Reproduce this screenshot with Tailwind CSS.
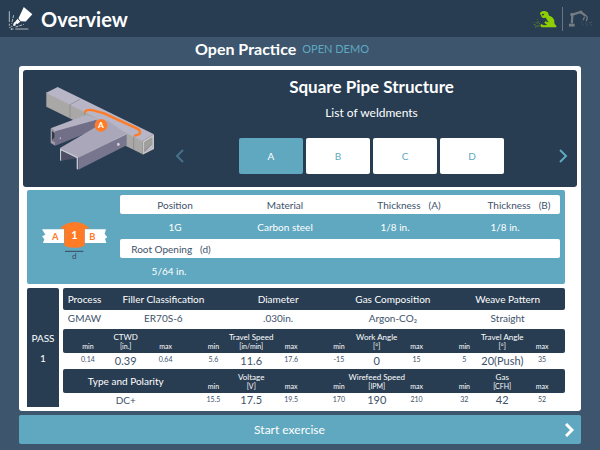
<!DOCTYPE html>
<html lang="en">
<head>
    <meta charset="UTF-8">
    <meta name="viewport" content="width=device-width, initial-scale=1.0">
    <title>Overview - Open Practice</title>
    <script src="https://cdn.jsdelivr.net/npm/@tailwindcss/browser@4"></script>
</head>
<body class="min-h-screen bg-[#3d566e] font-['Lato',sans-serif] text-[10px] leading-3 text-[#3d526a]">

<!-- Top bar -->
<header class="flex h-[37px] items-center justify-between bg-[#283d52] px-2 text-white">
    <div class="flex items-center gap-2">
        <svg class="h-[25px] w-[25px]" viewBox="24 18 76 76" fill="none" aria-hidden="true">
            <path d="M72 21L98 43L78 65L62 64L56 55Z" fill="#fff"/>
            <path d="M53 57L61 66L53 73L48 71L46 79L39 77L42 69L46 66Z" fill="#fff"/>
            <path d="M28 34V67M46 88H86" stroke="#fff" stroke-width="2"/>
            <path d="M41 46L35 72M47 82L72 74" stroke="#fff" stroke-width="2" stroke-dasharray="9 3"/>
            <path d="M28 72V78M28 83H32M34 78L37 82M34 88H41M34 86V91" stroke="#fff" stroke-width="2"/>
        </svg>
        <h1 class="text-[20px] leading-7 font-bold">Overview</h1>
    </div>
    <div class="flex items-center gap-[5px]">
        <svg class="h-6 w-6" viewBox="98 20 76 68" fill="none" aria-hidden="true">
            <path d="M120 37Q122 29 133 29Q144 29 147 37L148 43Q161 47 165 57L166 69L172 75V80H125L121 75L124 70L132 74L143 73L134 66L137 61L148 65L141 55L139 50L130 51Q123 48 124 43Z" fill="#8fce00"/>
            <path d="M126 38L134 37L131 43L127 42Z" fill="#283d52"/>
            <path d="M101 72H106M109 76H119M108 65L112 69M104 79H109M113 61L115 66M118 67L120 71M100 65H102M112 54V56" stroke="#7cb00e" stroke-width="2"/>
        </svg>
        <span class="h-6 w-px bg-[#6d747d]"></span>
        <svg class="h-6 w-6" viewBox="202 20 76 68" fill="none" aria-hidden="true">
            <path d="M205 69H223V78H205Z" fill="#757b82"/>
            <path d="M214 68L216 40L242 32L257 43" stroke="#757b82" stroke-width="7"/>
            <circle cx="215" cy="40" r="6" fill="#757b82"/>
            <circle cx="243" cy="32" r="5" fill="#757b82"/>
            <path d="M253 43Q263 42 263 51L260 61M254 48L250 58" stroke="#757b82" stroke-width="4"/>
            <path d="M257 67L265 72M247 69L251 74M268 66L278 64M260 75V78M274 70L279 76M248 62L244 66" stroke="#59636e" stroke-width="2"/>
        </svg>
    </div>
</header>

<main class="px-[19px]">
    <div class="mb-[5px] flex h-6 items-center justify-center gap-[6px] pr-9">
        <h2 class="text-[16px] font-bold text-white">Open Practice</h2>
        <span class="text-[11px] text-[#5fa8c0]">OPEN DEMO</span>
    </div>

    <div class="rounded-[3px] bg-white p-1">
        <!-- Structure and list of weldments -->
        <section class="flex h-[117px] rounded-[3px] bg-[#283d52] text-white">
            <div class="flex w-[143px] shrink-0 pt-[15px] pl-[19px]">
                <svg class="h-[87px] w-[114px]" viewBox="66 60 342 261" role="img" aria-label="Square pipe structure">
                    <path d="M79 83L113 66L402 208L368 228Z" fill="#b8b5c6"/>
                    <path d="M79 83L368 228V268L79 125Z" fill="#a9a8a6"/>
                    <path d="M79 83L368 228" stroke="#c9c8cf" stroke-width="2"/>
                    <path d="M368 228L402 208V252L368 269Z" fill="#c7c6c5"/>
                    <path d="M373 232L397 217V248L373 262Z" fill="#8e8c91"/>
                    <path d="M373 262L397 238V248Z" fill="#c5c3cf"/>
                    <path d="M373 234L396 219V236L373 255Z" fill="#a2a09f"/>
                    <path d="M150 119L180 103M150 119V160M194 142V164M341 215V255" stroke="#777680" stroke-width="1.5" fill="none"/>
                    <path d="M92 190L198 150L250 166L106 200Z" fill="#b4b1c2"/>
                    <path d="M106 199L230 164V192L106 242Z" fill="#716e87"/>
                    <path d="M92 190L106 199V242L92 234Z" fill="#9b99a6"/>
                    <path d="M96 198L104 204V231L96 225Z" fill="#34394c"/>
                    <path d="M96 225L104 217V231Z" fill="#77748a"/>
                    <ellipse cx="121" cy="220" rx="2" ry="3" fill="#c4c2cf"/>
                    <path d="M120 249L262 166L320 207L175 278Z" fill="#aaa7ba"/>
                    <path d="M175 276L320 207V241L175 314Z" fill="#78758f"/>
                    <path d="M120 249L174 276V314L170 311V280L124 257V289L120 286Z" fill="#c8c6d2"/>
                    <path d="M124 257L170 280L124 287Z" fill="#4d5064"/>
                    <path d="M175 277L320 207" stroke="#d0ceda" stroke-width="1.5"/>
                    <ellipse cx="295" cy="238" rx="4" ry="5" fill="#d5d3dc"/>
                    <path d="M195 141Q200 132 220 136L252 145L350 190Q364 197 359 207L345 212" fill="none" stroke="#ff7b26" stroke-width="7" stroke-linecap="round" stroke-linejoin="round"/>
                    <circle cx="243" cy="181" r="19" fill="#ff7b26"/>
                    <text x="243" y="189" text-anchor="middle" font-size="25" font-weight="700" fill="#fff">A</text>
                </svg>
            </div>
            <div class="flex grow flex-col items-center pt-[5px]">
                <h3 class="text-[17px] leading-6 font-bold">Square Pipe Structure</h3>
                <p class="mt-[6px] text-[12px] leading-4">List of weldments</p>
                <div class="mt-[17px] flex w-full items-center justify-between px-[9px]">
                    <button type="button" aria-label="Previous">
                        <svg class="h-[14px] w-[9px]" viewBox="0 0 9 14" fill="none" stroke="#46718b" stroke-width="2"><path d="M8 1L2 7L8 13"/></svg>
                    </button>
                    <div class="flex gap-[3px]">
                        <button type="button" class="h-9 w-16 rounded-[2px] bg-[#5fa8c0] text-white">A</button>
                        <button type="button" class="h-9 w-16 rounded-[2px] bg-white text-[#5fa8c0]">B</button>
                        <button type="button" class="h-9 w-16 rounded-[2px] bg-white text-[#5fa8c0]">C</button>
                        <button type="button" class="h-9 w-16 rounded-[2px] bg-white text-[#5fa8c0]">D</button>
                    </div>
                    <button type="button" aria-label="Next">
                        <svg class="h-[14px] w-[9px]" viewBox="0 0 9 14" fill="none" stroke="#5fa8c0" stroke-width="2"><path d="M1 1L7 7L1 13"/></svg>
                    </button>
                </div>
            </div>
        </section>

        <!-- Joint -->
        <section class="mt-[3px] mr-3 ml-1 flex rounded-[2px] bg-[#5fa8c0] pt-[5px] pr-[5px]">
            <div class="flex w-[93px] shrink-0 pt-[25px] pl-[14px]">
                <svg class="h-[42px] w-[67px]" viewBox="64 105 201 126" role="img" aria-label="Joint, root opening d">
                    <path d="M67 133H133V174H70L74 163L67 154L77 149Z" fill="#fff"/>
                    <path d="M195 133H259L255 147L263 157L256 161L260 174H195Z" fill="#fff"/>
                    <path d="M121 130Q141 111 165 111Q190 111 210 130L195 132V182Q166 195 134 182V132Z" fill="#ff7b26"/>
                    <path d="M136 199H191" stroke="#34495e" stroke-width="3"/>
                    <text x="107" y="164" text-anchor="middle" font-size="28" font-weight="700" fill="#ff7b26">A</text>
                    <text x="164" y="163" text-anchor="middle" font-size="33" font-weight="700" fill="#fff">1</text>
                    <text x="218" y="164" text-anchor="middle" font-size="28" font-weight="700" fill="#ff7b26">B</text>
                    <text x="164" y="223" text-anchor="middle" font-size="24" fill="#34495e">d</text>
                </svg>
            </div>
            <table class="w-full table-fixed text-center whitespace-nowrap">
                <tr class="h-[19px] bg-white">
                    <th class="rounded-l-[2px] font-normal">Position</th>
                    <th class="font-normal">Material</th>
                    <th class="pl-7 font-normal">Thickness<span class="pl-2">(A)</span></th>
                    <th class="rounded-r-[2px] pl-7 font-normal">Thickness<span class="pl-2">(B)</span></th>
                </tr>
                <tr class="h-[25px] text-white">
                    <td>1G</td>
                    <td>Carbon steel</td>
                    <td>1/8 in.</td>
                    <td>1/8 in.</td>
                </tr>
                <tr class="h-[19px] bg-white">
                    <th class="rounded-l-[2px] pr-2 font-normal">Root Opening<span class="pl-2">(d)</span></th>
                    <td colspan="3" class="rounded-r-[2px]"></td>
                </tr>
                <tr class="h-[26px] text-white">
                    <td class="pr-3">5/64 in.</td>
                    <td colspan="3"></td>
                </tr>
            </table>
        </section>

        <!-- Pass parameters -->
        <section class="mt-1 mr-3 ml-1 flex gap-1">
            <div class="flex w-8 shrink-0 flex-col items-center justify-center gap-2 rounded-t-[2px] bg-[#283d52] text-white">
                <span>PASS</span>
                <span>1</span>
            </div>
            <div class="grow">
                <table class="w-full table-fixed text-center whitespace-nowrap">
                    <tr class="h-[22px] bg-[#283d52] text-white">
                        <th class="w-[43px] rounded-l-[2px] font-normal">Process</th>
                        <th class="font-normal">Filler Classification</th>
                        <th class="font-normal">Diameter</th>
                        <th class="font-normal">Gas Composition</th>
                        <th class="rounded-r-[2px] font-normal">Weave Pattern</th>
                    </tr>
                    <tr class="h-[19px] align-top leading-4">
                        <td>GMAW</td>
                        <td>ER70S-6</td>
                        <td>.030in.</td>
                        <td>Argon-CO₂</td>
                        <td>Straight</td>
                    </tr>
                </table>
                <table class="w-full table-fixed text-center text-[7px] leading-[10px] whitespace-nowrap">
                    <tr class="h-[13px] bg-[#283d52] align-bottom text-[8px] text-white">
                        <th colspan="3" class="rounded-tl-[2px] font-normal">CTWD</th>
                        <th colspan="3" class="font-normal">Travel Speed</th>
                        <th colspan="3" class="font-normal">Work Angle</th>
                        <th colspan="3" class="rounded-tr-[2px] font-normal">Travel Angle</th>
                    </tr>
                    <tr class="h-[11px] bg-[#283d52] align-top leading-[9px] text-white">
                        <th class="rounded-bl-[2px] pl-2 font-normal">min</th>
                        <th class="font-normal">[in.]</th>
                        <th class="pr-1 font-normal">max</th>
                        <th class="pl-2 font-normal">min</th>
                        <th class="font-normal">[in/min]</th>
                        <th class="pr-1 font-normal">max</th>
                        <th class="pl-2 font-normal">min</th>
                        <th class="font-normal">[°]</th>
                        <th class="pr-1 font-normal">max</th>
                        <th class="pl-2 font-normal">min</th>
                        <th class="font-normal">[°]</th>
                        <th class="rounded-br-[2px] pr-1 font-normal">max</th>
                    </tr>
                    <tr class="h-[16px] align-top leading-3">
                        <td class="pl-2">0.14</td>
                        <td class="text-[11px] leading-4">0.39</td>
                        <td class="pr-1">0.64</td>
                        <td class="pl-2">5.6</td>
                        <td class="text-[11px] leading-4">11.6</td>
                        <td class="pr-1">17.6</td>
                        <td class="pl-2">-15</td>
                        <td class="text-[11px] leading-4">0</td>
                        <td class="pr-1">15</td>
                        <td class="pl-2">5</td>
                        <td class="text-[11px] leading-4">20(Push)</td>
                        <td class="pr-1">35</td>
                    </tr>
                    <tr class="h-[13px] bg-[#283d52] align-bottom text-[8px] text-white">
                        <th colspan="3" rowspan="2" class="rounded-l-[2px] align-middle text-[10px] font-normal">Type and Polarity</th>
                        <th colspan="3" class="font-normal">Voltage</th>
                        <th colspan="3" class="font-normal">Wirefeed Speed</th>
                        <th colspan="3" class="rounded-tr-[2px] font-normal">Gas</th>
                    </tr>
                    <tr class="h-[11px] bg-[#283d52] align-top leading-[9px] text-white">
                        <th class="pl-2 font-normal">min</th>
                        <th class="font-normal">[V]</th>
                        <th class="pr-1 font-normal">max</th>
                        <th class="pl-2 font-normal">min</th>
                        <th class="font-normal">[IPM]</th>
                        <th class="pr-1 font-normal">max</th>
                        <th class="pl-2 font-normal">min</th>
                        <th class="font-normal">[CFH]</th>
                        <th class="rounded-br-[2px] pr-1 font-normal">max</th>
                    </tr>
                    <tr class="h-[14px] align-top leading-3">
                        <td colspan="3" class="text-[10px] leading-[14px]">DC+</td>
                        <td class="pl-2">15.5</td>
                        <td class="text-[11px] leading-[14px]">17.5</td>
                        <td class="pr-1">19.5</td>
                        <td class="pl-2">170</td>
                        <td class="text-[11px] leading-[14px]">190</td>
                        <td class="pr-1">210</td>
                        <td class="pl-2">32</td>
                        <td class="text-[11px] leading-[14px]">42</td>
                        <td class="pr-1">52</td>
                    </tr>
                </table>
            </div>
        </section>
    </div>

    <button type="button" class="mt-1 flex h-[29px] w-full items-center rounded-[2px] bg-[#5fa8c0] px-[7px] text-[12px] leading-4 text-white">
        <span class="grow pr-3">Start exercise</span>
        <svg class="h-[14px] w-[9px]" viewBox="0 0 9 14" fill="none" stroke="currentColor" stroke-width="3" aria-hidden="true"><path d="M1 1L7 7L1 13"/></svg>
    </button>
</main>

</body>
</html>
